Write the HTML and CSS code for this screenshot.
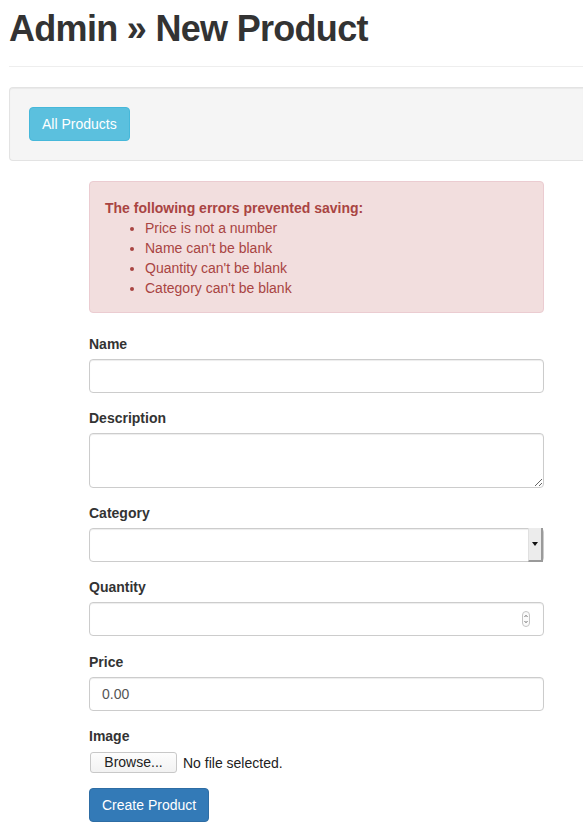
FILE: index.html
```html
<!DOCTYPE html>
<html lang="en">
<head>
<meta charset="utf-8">
<title>Admin » New Product</title>
<link rel="stylesheet" href="styles.css">
</head>
<body>
<div class="page">
  <div class="page-header">
    <h1>Admin » New Product</h1>
  </div>

  <div class="well">
    <a class="btn btn-info" href="#">All Products</a>
  </div>

  <div class="form-col">
    <div class="alert">
      <strong class="alert-title">The following errors prevented saving:</strong>
      <ul>
        <li>Price is not a number</li>
        <li>Name can't be blank</li>
        <li>Quantity can't be blank</li>
        <li>Category can't be blank</li>
      </ul>
    </div>

    <form class="product-form">
      <div class="form-group">
        <label for="name">Name</label>
        <input id="name" class="form-control" type="text">
      </div>

      <div class="form-group">
        <label for="description">Description</label>
        <textarea id="description" class="form-control textarea" rows="2"></textarea>
      </div>

      <div class="form-group">
        <label for="category">Category</label>
        <div class="control-wrap">
          <select id="category" class="form-control select"><option></option></select>
          <span class="select-btn"><span class="select-arrow"></span></span>
        </div>
      </div>

      <div class="form-group form-group-wide">
        <label for="quantity">Quantity</label>
        <div class="control-wrap">
          <input id="quantity" class="form-control" type="text">
          <svg class="spinner" width="8" height="16" viewBox="0 0 8 16" aria-hidden="true">
            <rect x="0.5" y="0.5" width="7" height="15" rx="3.5" fill="#fafafa" stroke="#c4c4c4"/>
            <path d="M2.5 6 L4 4.3 L5.5 6" fill="none" stroke="#666" stroke-width="0.9"/>
            <path d="M2.5 10 L4 11.7 L5.5 10" fill="none" stroke="#666" stroke-width="0.9"/>
          </svg>
        </div>
      </div>

      <div class="form-group">
        <label for="price">Price</label>
        <input id="price" class="form-control" type="text" value="0.00">
      </div>

      <div class="form-group">
        <label for="image">Image</label>
        <div class="file-row">
          <button type="button" class="browse-btn" id="image">Browse...</button>
          <span class="file-status">No file selected.</span>
        </div>
      </div>

      <button type="button" class="btn btn-primary">Create Product</button>
    </form>
  </div>
</div>
</body>
</html>
```

FILE: styles.css
```css
html, body {
  margin: 0;
  padding: 0;
  overflow: hidden;
  background: #fff;
}

body {
  font-family: "Liberation Sans", Arial, Helvetica, sans-serif;
  font-size: 14px;
  line-height: 20px;
  color: #333;
}

.page {
  padding-left: 9px;
}

.page-header {
  padding-top: 9px;
  padding-bottom: 17px;
  border-bottom: 1px solid #eee;
}

.page-header h1 {
  margin: 0;
  font-size: 36px;
  line-height: 40px;
  font-weight: bold;
  letter-spacing: -0.7px;
  color: #333;
}

.well {
  margin-top: 20px;
  padding: 19px;
  background: #f5f5f5;
  border: 1px solid #e3e3e3;
  border-right: none;
  border-radius: 4px 0 0 4px;
  box-shadow: inset 0 1px 1px rgba(0, 0, 0, 0.05);
}

.btn {
  display: inline-block;
  padding: 6px 12px;
  font-family: inherit;
  font-size: 14px;
  line-height: 20px;
  border: 1px solid transparent;
  border-radius: 4px;
  text-decoration: none;
  cursor: pointer;
  color: #fff;
}

.btn-info {
  background: #5bc0de;
  border-color: #46b8da;
}

.btn-primary {
  background: #337ab7;
  border-color: #2e6da4;
}

.form-col {
  margin-top: 20px;
  margin-left: 80px;
  width: 455px;
}

.alert {
  padding: 16px 15px 14px;
  background: #f2dede;
  border: 1px solid #ebccd1;
  border-radius: 4px;
  color: #a94442;
  margin-bottom: 21px;
}

.alert-title {
  display: block;
  font-weight: bold;
}

.alert ul {
  margin: 0;
  padding-left: 40px;
}

.product-form {
  margin: 0;
}

.form-group {
  margin-bottom: 15px;
}

.form-group-wide {
  margin-bottom: 16px;
}

.form-group label {
  display: inline-block;
  margin-bottom: 5px;
  font-weight: bold;
}

.form-control {
  display: block;
  box-sizing: border-box;
  width: 100%;
  height: 34px;
  padding: 6px 12px;
  margin: 0;
  font-family: inherit;
  font-size: 14px;
  line-height: 20px;
  color: #555;
  background: #fff;
  border: 1px solid #ccc;
  border-radius: 4px;
  box-shadow: inset 0 1px 1px rgba(0, 0, 0, 0.075);
}

.textarea {
  height: 55px;
  resize: both;
}

.select {
  appearance: none;
  -webkit-appearance: none;
}

.control-wrap {
  position: relative;
}

.select-btn {
  position: absolute;
  top: 0;
  bottom: 0;
  right: 1px;
  width: 12px;
  background: #ececec;
  border-left: 1px solid #e0e0e0;
  border-right: 2px solid #9a9a9a;
  border-bottom: 2px solid #9a9a9a;
  display: flex;
  align-items: center;
  justify-content: center;
}

.select-arrow {
  width: 0;
  height: 0;
  border-left: 3px solid transparent;
  border-right: 3px solid transparent;
  border-top: 4px solid #111;
}

.spinner {
  position: absolute;
  right: 14px;
  top: 9px;
}

.file-row {
  display: flex;
  align-items: center;
  padding-top: 1px;
  height: 21px;
}

.browse-btn {
  box-sizing: border-box;
  width: 87px;
  height: 21px;
  padding: 0;
  margin: 0 6px 0 1px;
  font-family: inherit;
  font-size: 14px;
  line-height: 19px;
  color: #222;
  background: linear-gradient(#fdfdfd, #f2f2f2);
  border: 1px solid #c8c8c8;
  border-radius: 3px;
}

.file-status {
  font-size: 14px;
  color: #222;
}
```
